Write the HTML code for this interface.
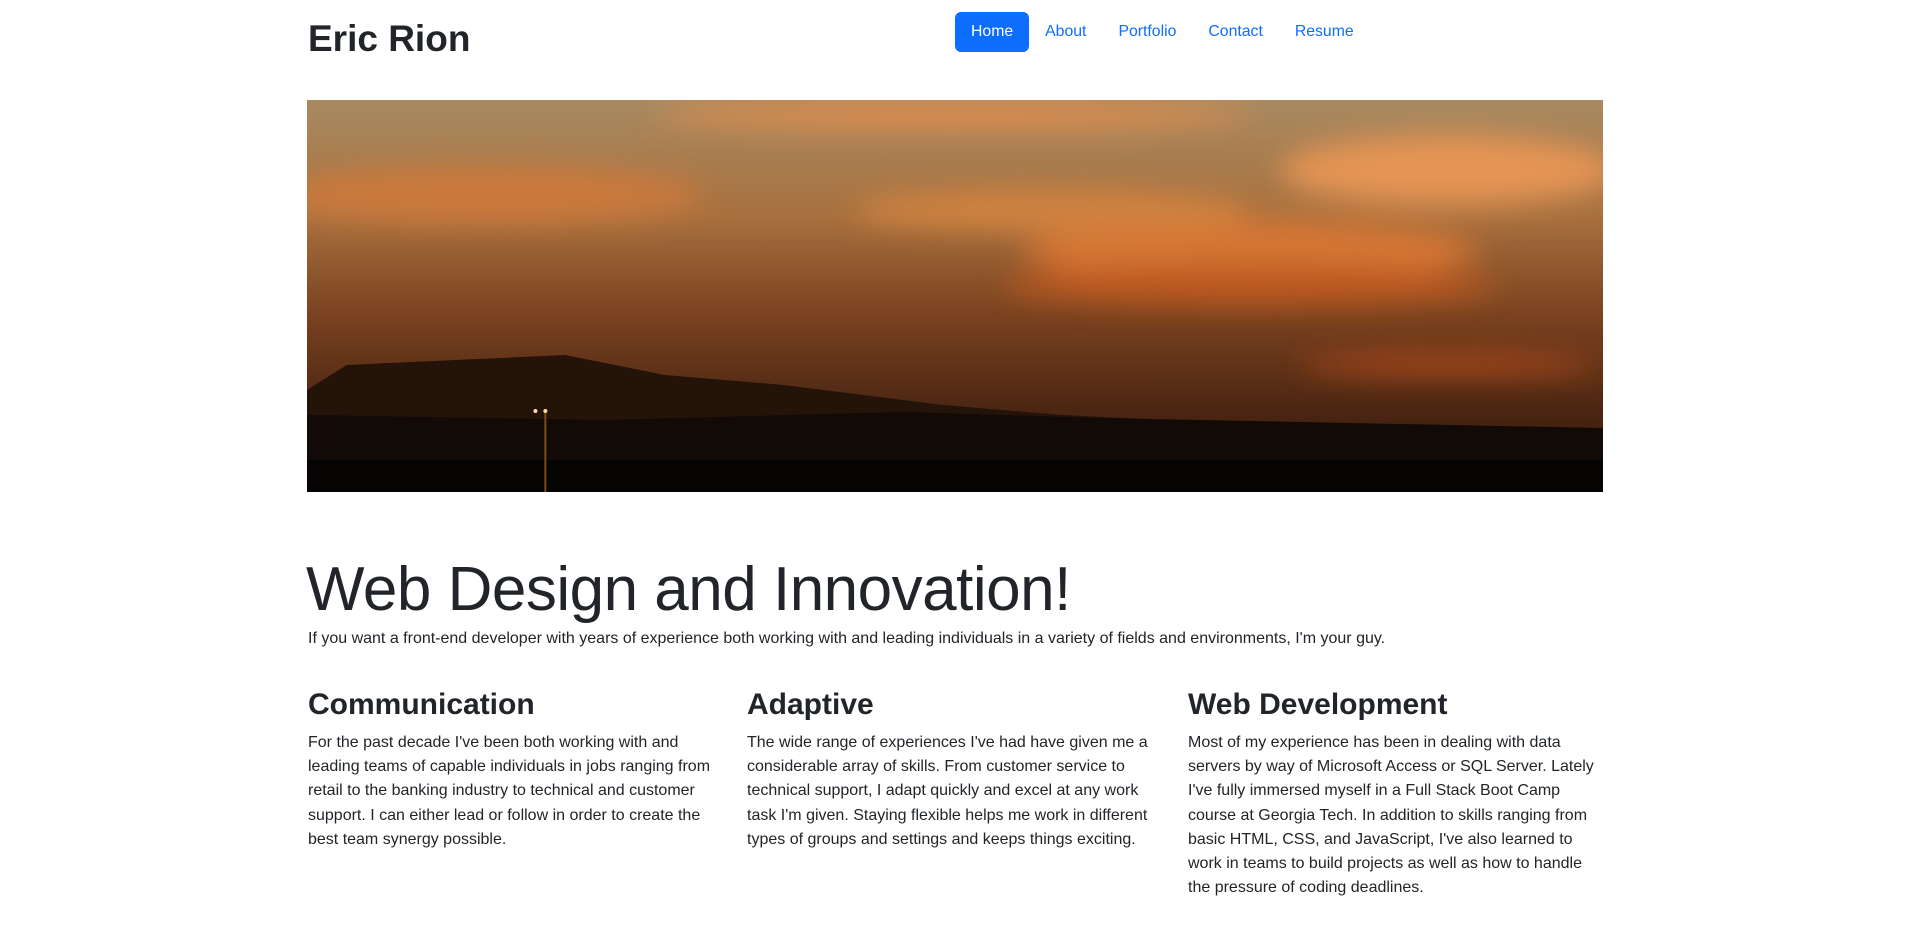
<!DOCTYPE html>
<html><head><meta charset="utf-8"><style>
html,body{margin:0;padding:0;background:#fff;}
body{font-family:"Segoe UI","Liberation Sans",sans-serif;color:#212529;width:1910px;height:931px;overflow:hidden;position:relative;}
.a{position:absolute;}
h1{position:absolute;left:308px;top:13px;margin:0;font-size:37px;font-weight:700;line-height:52px;}
.nav{position:absolute;left:955px;top:12px;height:40px;display:flex;}
.nav a{display:block;padding:0 16px;line-height:40px;font-size:15.8px;color:#0d6efd;text-decoration:none;}
.nav a.act{background:#0d6efd;color:#fff;border-radius:6px;}
.big{left:306px;top:552px;font-size:62px;font-weight:300;line-height:76px;margin:0;letter-spacing:-0.5px;}
.lead{left:308px;top:627px;font-size:16px;line-height:24px;}
.col{position:absolute;top:684px;width:405px;}
.col h2{margin:0 0 5px;font-size:30px;font-weight:700;line-height:42px;}
.col p{margin:0;font-size:16px;line-height:24.2px;}
</style></head><body>
<h1>Eric Rion</h1>
<div class="nav"><a class="act">Home</a><a>About</a><a>Portfolio</a><a>Contact</a><a>Resume</a></div>
<svg class="a" style="left:307px;top:100px" width="1296" height="392" viewBox="0 0 1305 392" preserveAspectRatio="none">
<defs>
<linearGradient id="sky" x1="0" y1="0" x2="0" y2="1">
<stop offset="0" stop-color="#a88a62"/><stop offset="0.3" stop-color="#a8703e"/><stop offset="0.55" stop-color="#7a4220"/><stop offset="0.8" stop-color="#4a2512"/><stop offset="1" stop-color="#2a150a"/></linearGradient>
<filter id="bl"><feGaussianBlur stdDeviation="14"/></filter>
</defs>
<rect width="1305" height="392" fill="url(#sky)"/>
<g filter="url(#bl)" opacity="0.85">
<ellipse cx="180" cy="95" rx="220" ry="28" fill="#d27a3a"/>
<ellipse cx="650" cy="15" rx="300" ry="14" fill="#e88d4a"/>
<ellipse cx="1150" cy="70" rx="170" ry="35" fill="#f09a55"/>
<ellipse cx="950" cy="150" rx="230" ry="30" fill="#e07a35"/>
<ellipse cx="950" cy="185" rx="250" ry="20" fill="#c65a1e"/>
<ellipse cx="1150" cy="265" rx="150" ry="8" fill="#d0521d"/>
<ellipse cx="750" cy="110" rx="200" ry="20" fill="#d88640"/>
</g>
<path d="M0 290 L40 265 L150 260 L260 255 L360 275 L480 285 L560 295 L640 305 L760 315 L900 322 L1000 325 L1120 330 L1305 330 L1305 392 L0 392Z" fill="#231309"/>
<path d="M0 315 L300 320 L600 312 L800 318 L1000 322 L1305 328 L1305 392 L0 392Z" fill="#120a06"/>
<rect x="0" y="360" width="1305" height="32" fill="#070404"/>
<circle cx="240" cy="311" r="2" fill="#ffdca0"/><circle cx="230" cy="311" r="2" fill="#ffdca0"/>
<rect x="239" y="313" width="2" height="80" fill="#7a4a20"/>
</svg>
<div class="a big">Web Design and Innovation!</div>
<div class="a lead">If you want a front-end developer with years of experience both working with and leading individuals in a variety of fields and environments, I'm your guy.</div>
<div class="col" style="left:308px"><h2>Communication</h2><p>For the past decade I've been both working with and leading teams of capable individuals in jobs ranging from retail to the banking industry to technical and customer support. I can either lead or follow in order to create the best team synergy possible.</p></div>
<div class="col" style="left:747px"><h2>Adaptive</h2><p>The wide range of experiences I've had have given me a considerable array of skills. From customer service to technical support, I adapt quickly and excel at any work task I'm given. Staying flexible helps me work in different types of groups and settings and keeps things exciting.</p></div>
<div class="col" style="left:1188px;width:418px"><h2>Web Development</h2><p>Most of my experience has been in dealing with data servers by way of Microsoft Access or SQL Server. Lately I've fully immersed myself in a Full Stack Boot Camp course at Georgia Tech. In addition to skills ranging from basic HTML, CSS, and JavaScript, I've also learned to work in teams to build projects as well as how to handle the pressure of coding deadlines.</p></div>
</body></html>
